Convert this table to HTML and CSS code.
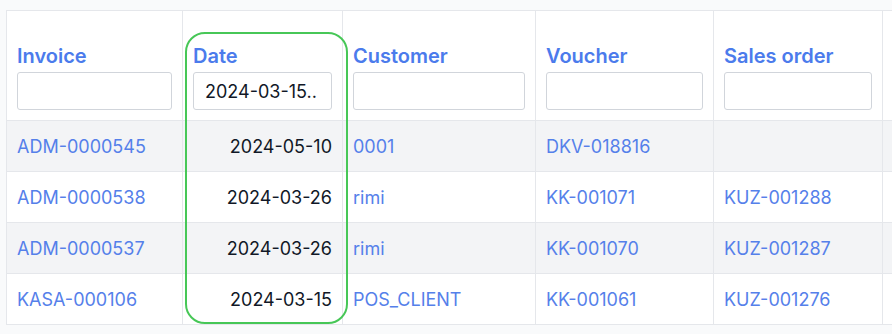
FILE: index.html
```html
<!DOCTYPE html>
<html lang="en">
<head>
<meta charset="utf-8">
<title>Invoices</title>
<link rel="stylesheet" href="styles.css">
</head>
<body>
<div class="wrap">
  <table class="grid">
    <colgroup>
      <col class="c-inv"><col class="c-date"><col class="c-cust"><col class="c-vouch"><col class="c-so"><col class="c-more">
    </colgroup>
    <thead>
      <tr>
        <th><div class="label">Invoice</div><input class="filter" type="text"></th>
        <th><div class="label">Date</div><input class="filter" type="text" value="2024-03-15.."></th>
        <th><div class="label">Customer</div><input class="filter" type="text"></th>
        <th><div class="label">Voucher</div><input class="filter" type="text"></th>
        <th><div class="label">Sales order</div><input class="filter" type="text"></th>
        <th></th>
      </tr>
    </thead>
    <tbody>
      <tr>
        <td><a href="#">ADM-0000545</a></td>
        <td class="num">2024-05-10</td>
        <td><a href="#">0001</a></td>
        <td><a href="#">DKV-018816</a></td>
        <td></td>
        <td></td>
      </tr>
      <tr>
        <td><a href="#">ADM-0000538</a></td>
        <td class="num">2024-03-26</td>
        <td><a href="#">rimi</a></td>
        <td><a href="#">KK-001071</a></td>
        <td><a href="#">KUZ-001288</a></td>
        <td></td>
      </tr>
      <tr>
        <td><a href="#">ADM-0000537</a></td>
        <td class="num">2024-03-26</td>
        <td><a href="#">rimi</a></td>
        <td><a href="#">KK-001070</a></td>
        <td><a href="#">KUZ-001287</a></td>
        <td></td>
      </tr>
      <tr>
        <td><a href="#">KASA-000106</a></td>
        <td class="num">2024-03-15</td>
        <td><a href="#">POS_CLIENT</a></td>
        <td><a href="#">KK-001061</a></td>
        <td><a href="#">KUZ-001276</a></td>
        <td></td>
      </tr>
    </tbody>
  </table>
  <div class="highlight"></div>
</div>
</body>
</html>
```
FILE: styles.css
```css
html, body {
  margin: 0;
  padding: 0;
  background: #f9fafb;
  font-family: "Inter", "Liberation Sans", sans-serif;
  overflow: hidden;
}

.wrap {
  position: relative;
  padding: 10px 0 0 6px;
}

.grid {
  border-collapse: collapse;
  table-layout: fixed;
  width: 976px;
  background: #ffffff;
}

.c-inv { width: 176px; }
.c-date { width: 160px; }
.c-cust { width: 193px; }
.c-vouch { width: 178px; }
.c-so { width: 169px; }
.c-more { width: 100px; }

.grid th,
.grid td {
  border: 1px solid #e5e7eb;
  padding: 0 10px;
  text-align: left;
}

.grid th {
  height: 99px;
  vertical-align: bottom;
  padding-bottom: 10px;
  font-weight: normal;
}

.label {
  color: #4b7bec;
  font-size: 20px;
  font-weight: 600;
  line-height: 24px;
  margin-bottom: 4px;
}

.filter {
  display: block;
  box-sizing: border-box;
  width: 100%;
  height: 38px;
  margin: 0;
  border: 1px solid #d1d5db;
  border-radius: 3px;
  padding: 0 11px;
  font-family: inherit;
  font-size: 18px;
  color: #111827;
  background: #ffffff;
}

.grid td {
  height: 50px;
  font-size: 18px;
  color: #111827;
}

.grid tbody tr:nth-child(odd) td {
  background: #f3f4f6;
}

.grid td.num {
  text-align: right;
}

.grid a {
  color: #5580ea;
  text-decoration: none;
}

.highlight {
  position: absolute;
  left: 185px;
  top: 32px;
  width: 163px;
  height: 292px;
  box-sizing: border-box;
  border: 2px solid #47c757;
  border-radius: 20px;
  pointer-events: none;
}
```
